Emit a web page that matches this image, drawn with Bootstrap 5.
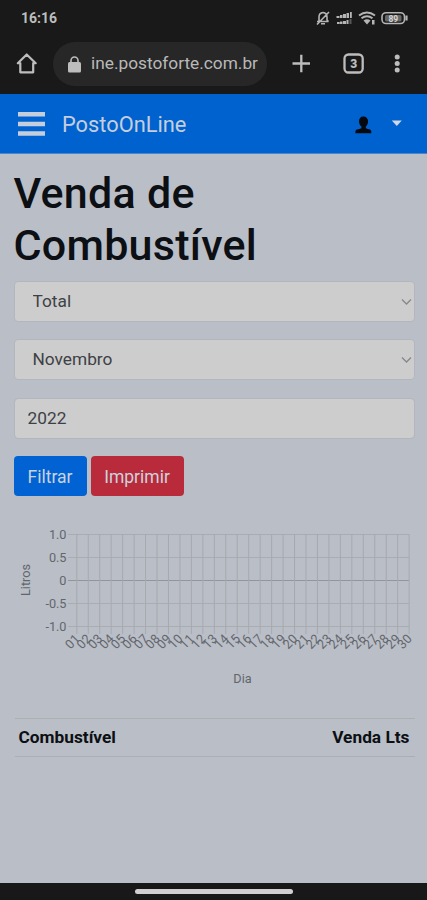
<!DOCTYPE html>
<html lang="pt-BR">
<head>
<meta charset="utf-8">
<meta name="viewport" content="width=device-width, initial-scale=1">
<title>PostoOnLine</title>
<link href="https://cdn.jsdelivr.net/npm/bootstrap@5.3.0/dist/css/bootstrap.min.css" rel="stylesheet">
<style>
  body { font-family: Roboto, "Liberation Sans", sans-serif; background: #babec7; height: 900px; overflow: hidden; color: #0c0f13; }
  svg { display: block; flex: none; }
  .phone-top { background: #191919; height: 94px; color: #bdbdbd; }
  .status-row { height: 36px; padding: 0 18px 0 21px; }
  .clock { font-size: 14px; font-weight: 700; line-height: 36px; }
  .browser-row { height: 56px; padding-left: 15px; }
  .address { width: 214px; height: 44px; margin-left: 15px; padding-left: 15px; background: #272727; color: #b9b9b9; font-size: 17.3px; }
  .address-text { margin-left: 10px; white-space: nowrap; }
  .app-bar { height: 60px; background: #0062cf; padding: 0 23px 0 18px; border-bottom: 1px solid #4c86ca; }
  .app-name { color: #c6cedb; font-size: 21.8px; margin: 2px 0 0 17px; line-height: 1; }
  .page { padding: 13px 12.5px 0 13.5px; }
  .page-title { font-size: 43px; line-height: 52px; font-weight: 500; margin-bottom: 9.6px; letter-spacing: .25px; }
  .field, .field:focus { height: 41px; border-radius: 4px; background-color: #cdcdcd; border: 1px solid #b3b6bc; color: #3d4145; font-size: 17.3px; line-height: 1.2; margin-bottom: 17.6px; padding: 0 13px; box-shadow: none; }
  select.field { padding-left: 18px; background-image: none; }
  .chevron { position: absolute; right: 3px; top: 17px; pointer-events: none; }
  .action { height: 40px; border: 0; border-radius: 4px; padding: 1px 0 0; font-size: 17.5px; color: #cbd2df; }
  .action-filter { background: #0062d3; width: 73px; }
  .action-print { background: #b92b3b; width: 93px; }
  .chart { margin: 14.4px 0 0 -13.5px; font-size: 12.7px; }
  .chart text { fill: #62666c; }
  .fuel { border-color: #acaeb2; font-size: 17.3px; font-weight: 700; margin: 0 0 0 1px; height: 39px; width: 400px; border-style: solid; border-width: 1px 0; padding: 1px 5px 0 4px; }
  .gesture-bar { height: 17px; background: #181818; }
  .gesture-pill { width: 158px; height: 5px; background: #d0d0d0; }
</style>
<script src="https://cdn.jsdelivr.net/npm/bootstrap@5.3.0/dist/js/bootstrap.bundle.min.js"></script>
</head>
<body class="d-flex flex-column">
<header class="phone-top flex-shrink-0">
  <div class="status-row d-flex align-items-center justify-content-between">
    <span class="clock">16:16</span>
    <svg width="94" height="18" viewBox="315 9 94 18" fill="none" stroke="#b5b5b5" stroke-width="1.6" aria-hidden="true">
      <path d="M317 21.500h11.500M319 21v-4q0-4 4-4.500q4 .5 4 4.500v3l1.500 1.500M321 23.700h4M317 24.500l12-12.500"/>
      <g fill="#b5b5b5" stroke="none"><path d="M336.500 16h3v2h-3zM340 15h2.500v3h-2.500zM343 14h3v4h-3zM346.500 13h2.500v5h-2.500zM350 12h1.800v6h-1.800zM337 22h2.700v2h-2.700zM340 21.500h2.500v2.500h-2.500zM343 21h3v3h-3zM346.500 20h2v4h-2z"/><path opacity=".4" d="M349.500 19h2v5h-2z"/></g>
      <path d="M359 15.500q8-6 16 0M361.500 18.300q5.500-4 11 0" stroke-width="2"/>
      <path d="M363.500 20.500q3.500-2.500 7 0l-3.500 4zM372 20h2.500v4.500h-2.500z" fill="#b5b5b5" stroke="none"/>
      <rect x="382" y="12.700" width="22.500" height="10.800" rx="4"/>
      <path d="M406.500 15.500v5" stroke-width="2.200"/>
      <rect x="385" y="15" width="16.500" height="6.500" rx="1.500" fill="#666" stroke="none"/>
      <text x="393.300" y="21.500" text-anchor="middle" font-size="8.500" font-weight="700" fill="#d5d5d5" stroke="none">89</text>
    </svg>
  </div>
  <div class="browser-row d-flex align-items-center">
    <svg width="23" height="24" viewBox="15 52 23 24" fill="none" stroke="#bdbdbd" stroke-width="2.200" aria-label="Início"><path d="M26.700 54.500L17.800 63.200H20.300V72.300H33.200V63.200H35.700Z" stroke-linejoin="round"/></svg>
    <div class="address rounded-pill d-flex align-items-center">
      <svg width="13" height="17" viewBox="0 0 13 17" aria-hidden="true"><path d="M3 7V4.500a3.500 3.500 0 0 1 7 0V7" fill="none" stroke="#bdbdbd" stroke-width="1.600"/><rect y="6" width="13" height="10.500" rx="1.500" fill="#bdbdbd"/></svg>
      <div class="address-text">ine.postoforte.com.br</div>
    </div>
    <svg width="140" height="30" viewBox="287 49 140 30" fill="none" stroke="#bdbdbd" stroke-width="2.300" class="ms-auto" aria-hidden="true">
      <path d="M292.500 63.500h17.500M301.300 54.800v17.500"/>
      <rect x="344.500" y="54.500" width="18.200" height="18" rx="4"/>
      <text x="353.700" y="68" text-anchor="middle" font-size="12" font-weight="900" fill="#bdbdbd" stroke="none">3</text>
      <g fill="#bdbdbd" stroke="none"><circle cx="397.200" cy="57" r="2.500"/><circle cx="397.200" cy="63.500" r="2.500"/><circle cx="397.200" cy="70" r="2.500"/></g>
    </svg>
  </div>
</header>
<nav class="app-bar d-flex align-items-center flex-shrink-0">
  <svg width="27" height="24" viewBox="0 0 27 24" fill="#c6cedb" aria-label="Menu"><path d="M0 0h27v4.500H0zM0 9.700h27v4.500H0zM0 19.300h27v4.500H0z"/></svg>
  <span class="app-name">PostoOnLine</span>
  <svg width="50" height="20" viewBox="354 114 50 20" class="ms-auto" aria-hidden="true">
    <path d="M363.200 116.500c3.200 0 4.900 2 4.900 5 0 2.300-1.200 4-2.300 5.100v1.700c1.500 1 4.400 .7 5.200 2.200q.4 1 .3 2.800h-15.900q-.2-1.800.3-2.800c.9-1.500 4.200-1.200 5.700-2.200v-1.700c-1.200-1.100-2.400-2.800-2.400-5.100 0-3 1.400-5 4.200-5z" fill="#05080c"/>
    <path d="M391.800 120.500h10l-5 5.500z" fill="#d0d8e5"/>
  </svg>
</nav>
<main class="page flex-grow-1">
  <h1 class="page-title">Venda de<br>Combustível</h1>
  <div class="position-relative">
    <select class="form-select field" aria-label="Tipo"><option>Total</option></select>
    <svg class="chevron" width="11" height="8" viewBox="0 0 11 8" fill="none" stroke="#85888b" stroke-width="1.300"><path d="M1 1.500l4.500 4.500L10 1.500"/></svg>
  </div>
  <div class="position-relative">
    <select class="form-select field" aria-label="Mês"><option>Novembro</option></select>
    <svg class="chevron" width="11" height="8" viewBox="0 0 11 8" fill="none" stroke="#85888b" stroke-width="1.300"><path d="M1 1.500l4.500 4.500L10 1.500"/></svg>
  </div>
  <input class="form-control field" aria-label="Ano" value="2022">
  <div class="d-flex gap-1">
    <button class="btn action action-filter">Filtrar</button>
    <button class="btn action action-print">Imprimir</button>
  </div>
  <svg class="chart" id="chart" width="427" height="207" viewBox="0 511 427 207" role="img" aria-label="Litros por dia">
    <g id="grid" stroke="#a6a9af" stroke-width="1"></g>
    <g id="labels"></g>
    <text transform="translate(30 580) rotate(-90)" text-anchor="middle">Litros</text>
    <text x="242.500" y="683" text-anchor="middle">Dia</text>
  </svg>
  <div class="fuel d-flex justify-content-between align-items-center"><span>Combustível</span><span>Venda Lts</span></div>
</main>
<footer class="gesture-bar d-flex justify-content-center align-items-center flex-shrink-0"><div class="gesture-pill rounded-pill"></div></footer>
<script>
  const grid = document.getElementById('grid'), labels = document.getElementById('labels');
  const add = (parent, tag, attrs, text) => {
    const el = document.createElementNS('http://www.w3.org/2000/svg', tag);
    for (const key in attrs) el.setAttribute(key, attrs[key]);
    if (text) el.textContent = text;
    parent.appendChild(el);
  };
  ['1.0', '0.5', '0', '-0.5', '-1.0'].forEach((tick, i) => {
    const y = 534.5 + i * 23;
    add(grid, 'line', { x1: 68, x2: 409, y1: y, y2: y, stroke: i === 2 ? '#92959a' : '#a9acb1' });
    add(labels, 'text', { x: 66.5, y: y + 4, 'text-anchor': 'end' }, tick);
  });
  for (let day = 1; day <= 30; day++) {
    const x = 76.8 + (day - 1) * 11.46;
    add(grid, 'line', { x1: x, x2: x, y1: 534, y2: 634 });
    add(labels, 'text', { transform: `translate(${x} 636) rotate(-46)`, x: 0, y: 5, 'text-anchor': 'end' }, String(day).padStart(2, '0'));
  }
</script>
</body>
</html>
